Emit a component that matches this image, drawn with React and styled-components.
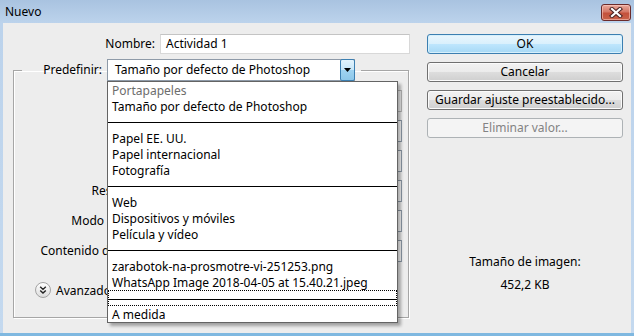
import React from 'react';
import styled, { createGlobalStyle, css } from 'styled-components';

const Global = createGlobalStyle`
  html, body { margin: 0; padding: 0; background: #ffffff; }
  body {
    font-family: "Noto Sans", "Liberation Sans", Arial, sans-serif;
    font-size: 12px;
    color: #000;
  }
  #root { width: 634px; height: 336px; }
`;

const Window = styled.div`
  width: 634px;
  height: 336px;
  box-sizing: border-box;
  display: flex;
  flex-direction: column;
  background: linear-gradient(#a9c3e0 0px, #bcd3ec 23px, #c4d9ef 100%);
  padding: 0 3px 0 3px;
  border-bottom: 3px solid #7fb8e0;
`;

const TitleBar = styled.div`
  height: 23px;
  flex: none;
  display: flex;
  align-items: flex-start;
  justify-content: space-between;
  padding: 0 0 0 2px;
`;

const Title = styled.span`
  line-height: 23px;
  font-size: 12px;
  color: #000;
`;

const CloseBtn = styled.div`
  margin-top: 4px;
  width: 30px;
  height: 17px;
  box-sizing: border-box;
  border: 1px solid #6b2b2b;
  border-radius: 3px;
  background: linear-gradient(#e9a99c 0%, #d47867 45%, #c4513c 55%, #c8624a 100%);
  box-shadow: inset 0 0 0 1px rgba(255, 210, 200, 0.55);
  display: flex;
  align-items: center;
  justify-content: center;
`;

const Client = styled.div`
  flex: 1;
  background: #ededed;
  display: grid;
  grid-template-columns: 397px 196px;
  column-gap: 17px;
  padding: 11px 8px 0 10px;
  box-sizing: border-box;
`;

const LeftCol = styled.div`
  display: flex;
  flex-direction: column;
`;

const NameRow = styled.div`
  display: flex;
  align-items: center;
  gap: 5px;
  height: 20px;
`;

const Label = styled.label`
  width: ${(p) => p.$w}px;
  flex: none;
  text-align: right;
  white-space: nowrap;
  line-height: 16px;
`;

const TextInput = styled.div`
  width: 250px;
  height: 20px;
  box-sizing: border-box;
  background: #fff;
  border: 1px solid #d8d8d8;
  border-top-color: #c4c4c4;
  padding: 0 5px;
  line-height: 18px;
`;

const Group = styled.fieldset`
  margin: 5px 0 0 0;
  width: 396px;
  box-sizing: border-box;
  border: 1px solid #a6a6a6;
  box-shadow: inset 1px 1px 0 #ffffff, 1px 1px 0 #ffffff;
  padding: 9px 6px 17px 8px;
  min-inline-size: 0;
  display: flex;
  flex-direction: column;
  gap: 8px;
`;

const Legend = styled.legend`
  padding: 0 6px 0 0;
`;

const LegendInner = styled.div`
  display: flex;
  align-items: center;
  gap: 5px;
`;

const SelectWrap = styled.div`
  position: relative;
  width: ${(p) => p.$w}px;
  height: 22px;
`;

const SelectBox = styled.div`
  width: 100%;
  height: 22px;
  box-sizing: border-box;
  background: #fff;
  border: 1px solid #8e9aa8;
  display: flex;
  align-items: stretch;
`;

const SelectText = styled.span`
  flex: 1;
  padding-left: 7px;
  line-height: 20px;
  white-space: nowrap;
  overflow: hidden;
`;

const ArrowBtn = styled.span`
  width: 15px;
  flex: none;
  box-sizing: border-box;
  border: 1px solid #3c7fb1;
  border-radius: 2px;
  margin: -1px -1px -1px 0;
  background: linear-gradient(#e3f3fc 0%, #c7e6f8 50%, #9fd3f1 51%, #8ec8ea 100%);
  display: flex;
  align-items: center;
  justify-content: center;
`;

const Menu = styled.div`
  position: absolute;
  z-index: 10;
  top: 100%;
  left: 0;
  width: 291px;
  box-sizing: border-box;
  background: #fff;
  border: 1px solid #646464;
  box-shadow: 3px 3px 3px rgba(0, 0, 0, 0.32);
  display: flex;
  flex-direction: column;
`;

const Option = styled.div`
  height: 16px;
  box-sizing: border-box;
  padding: 2px 0 0 4px;
  line-height: 14px;
  white-space: nowrap;
  color: ${(p) => (p.$muted ? '#6d6d6d' : '#000')};
`;

const Separator = styled.div`
  height: 16px;
  box-sizing: border-box;
  position: relative;
  ${(p) =>
    p.$focused &&
    css`
      border: 1px dotted #000;
    `}
  &::after {
    content: '';
    position: absolute;
    left: 0;
    right: 0;
    top: 8px;
    height: 1px;
    background: #000;
  }
`;

const FieldRow = styled.div`
  display: flex;
  align-items: center;
  gap: 5px;
  height: 22px;
`;

const Control = styled.div`
  flex: 1;
  height: 22px;
  box-sizing: border-box;
  background: ${(p) => (p.$disabled ? '#f4f4f4' : '#fff')};
  border: 1px solid ${(p) => (p.$disabled ? '#b5b5b5' : '#8e9aa8')};
`;

const AdvRow = styled.div`
  margin-top: 10px;
  display: flex;
  align-items: center;
  gap: 5px;
  padding-left: 13px;
  height: 20px;
`;

const RightCol = styled.div`
  display: flex;
  flex-direction: column;
  gap: 8px;
`;

const Button = styled.div`
  height: 20px;
  box-sizing: border-box;
  border-radius: 3px;
  text-align: center;
  line-height: 18px;
  border: 1px solid #707070;
  background: linear-gradient(#f2f2f2 0%, #ebebeb 50%, #dddddd 51%, #cfcfcf 100%);
  box-shadow: inset 0 0 0 1px #fbfbfb;
  ${(p) =>
    p.$variant === 'primary' &&
    css`
      border-color: #3c7fb1;
      background: linear-gradient(#eaf6fd 0%, #d9f0fc 50%, #bee6fd 51%, #a7d9f5 100%);
      box-shadow: inset 0 0 0 1px #d6f0fc;
    `}
  ${(p) =>
    p.$variant === 'disabled' &&
    css`
      border-color: #adb2b5;
      background: #f4f4f4;
      box-shadow: none;
      color: #838383;
    `}
`;

const Info = styled.div`
  margin-top: 108px;
  display: flex;
  flex-direction: column;
  align-items: center;
  gap: 7px;
  line-height: 16px;
`;

const menuItems = [
  { t: 'Portapapeles', muted: true },
  { t: 'Tamaño por defecto de Photoshop' },
  { sep: true },
  { t: 'Papel EE. UU.' },
  { t: 'Papel internacional' },
  { t: 'Fotografía' },
  { sep: true },
  { t: 'Web' },
  { t: 'Dispositivos y móviles' },
  { t: 'Película y vídeo' },
  { sep: true },
  { t: 'zarabotok-na-prosmotre-vi-251253.png' },
  { t: 'WhatsApp Image 2018-04-05 at 15.40.21.jpeg' },
  { sep: true, focused: true },
  { t: 'A medida' },
];

const fields = [
  { id: 'size', label: '', disabled: true },
  { id: 'w', label: '' },
  { id: 'h', label: '' },
  { id: 'res', label: 'Resolución:' },
  { id: 'mode', label: 'Modo de color:' },
  { id: 'bg', label: 'Contenido de fondo:' },
];

function CloseIcon() {
  return (
    <svg width="14" height="11" viewBox="0 0 14 11">
      <g strokeLinecap="square">
        <path d="M3 2 L11 9 M11 2 L3 9" stroke="#4a2323" strokeWidth="4.2" />
        <path d="M3 2 L11 9 M11 2 L3 9" stroke="#ffffff" strokeWidth="2.2" />
      </g>
    </svg>
  );
}

function AdvIcon() {
  return (
    <svg width="16" height="16" viewBox="0 0 16 16">
      <defs>
        <linearGradient id="advg" x1="0" y1="0" x2="0" y2="1">
          <stop offset="0" stopColor="#ffffff" />
          <stop offset="1" stopColor="#dcdcdc" />
        </linearGradient>
      </defs>
      <circle cx="8" cy="8" r="7.5" fill="url(#advg)" stroke="#a3a3a3" />
      <path d="M5.2 4.8 L8 7.4 L10.8 4.8 M5.2 8.4 L8 11 L10.8 8.4" fill="none" stroke="#222" strokeWidth="1.4" />
    </svg>
  );
}

export default function App() {
  return (
    <>
      <Global />
      <Window>
        <TitleBar>
          <Title>Nuevo</Title>
          <CloseBtn>
            <CloseIcon />
          </CloseBtn>
        </TitleBar>
        <Client>
          <LeftCol>
            <NameRow>
              <Label $w={142}>Nombre:</Label>
              <TextInput>Actividad 1</TextInput>
            </NameRow>
            <Group>
              <Legend>
                <LegendInner>
                  <Label $w={80}>Predefinir:</Label>
                  <SelectWrap $w={248}>
                    <SelectBox>
                      <SelectText>Tamaño por defecto de Photoshop</SelectText>
                      <ArrowBtn>
                        <svg width="7" height="4" viewBox="0 0 7 4">
                          <path d="M0 0 H7 L3.5 4 Z" fill="#000" />
                        </svg>
                      </ArrowBtn>
                    </SelectBox>
                    <Menu>
                      {menuItems.map((it, i) =>
                        it.sep ? (
                          <Separator key={i} $focused={it.focused} />
                        ) : (
                          <Option key={i} $muted={it.muted}>
                            {it.t}
                          </Option>
                        )
                      )}
                    </Menu>
                  </SelectWrap>
                </LegendInner>
              </Legend>
              {fields.map((f) => (
                <FieldRow key={f.id}>
                  <Label $w={134}>{f.label}</Label>
                  <Control $disabled={f.disabled} />
                </FieldRow>
              ))}
              <AdvRow>
                <AdvIcon />
                <span>Avanzado</span>
              </AdvRow>
            </Group>
          </LeftCol>
          <RightCol>
            <Button $variant="primary">OK</Button>
            <Button>Cancelar</Button>
            <Button>Guardar ajuste preestablecido...</Button>
            <Button $variant="disabled">Eliminar valor...</Button>
            <Info>
              <span>Tamaño de imagen:</span>
              <span>452,2 KB</span>
            </Info>
          </RightCol>
        </Client>
      </Window>
    </>
  );
}
